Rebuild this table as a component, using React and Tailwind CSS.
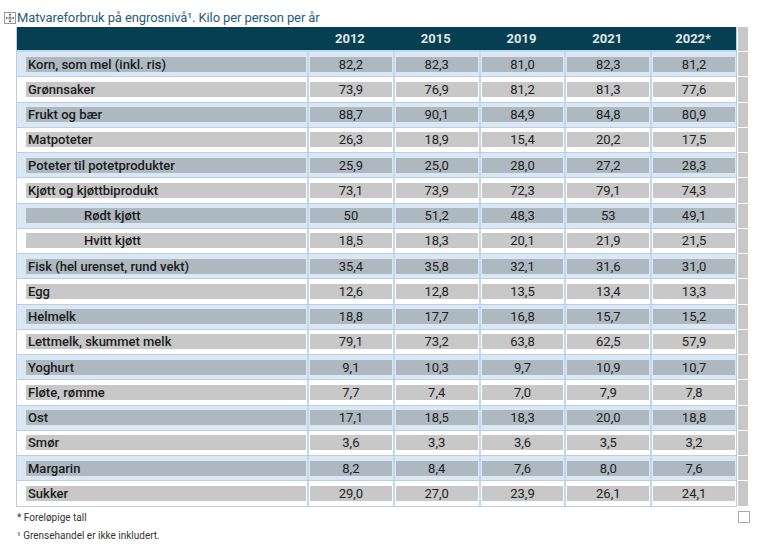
import React from 'react'

const years = ['2012', '2015', '2019', '2021', '2022*']

const rows = [
  { label: 'Korn, som mel (inkl. ris)', values: ['82,2', '82,3', '81,0', '82,3', '81,2'] },
  { label: 'Grønnsaker', values: ['73,9', '76,9', '81,2', '81,3', '77,6'] },
  { label: 'Frukt og bær', values: ['88,7', '90,1', '84,9', '84,8', '80,9'] },
  { label: 'Matpoteter', values: ['26,3', '18,9', '15,4', '20,2', '17,5'] },
  { label: 'Poteter til potetprodukter', values: ['25,9', '25,0', '28,0', '27,2', '28,3'] },
  { label: 'Kjøtt og kjøttbiprodukt', values: ['73,1', '73,9', '72,3', '79,1', '74,3'] },
  { label: 'Rødt kjøtt', indent: true, values: ['50', '51,2', '48,3', '53', '49,1'] },
  { label: 'Hvitt kjøtt', indent: true, values: ['18,5', '18,3', '20,1', '21,9', '21,5'] },
  { label: 'Fisk (hel urenset, rund vekt)', values: ['35,4', '35,8', '32,1', '31,6', '31,0'] },
  { label: 'Egg', values: ['12,6', '12,8', '13,5', '13,4', '13,3'] },
  { label: 'Helmelk', values: ['18,8', '17,7', '16,8', '15,7', '15,2'] },
  { label: 'Lettmelk, skummet melk', values: ['79,1', '73,2', '63,8', '62,5', '57,9'] },
  { label: 'Yoghurt', values: ['9,1', '10,3', '9,7', '10,9', '10,7'] },
  { label: 'Fløte, rømme', values: ['7,7', '7,4', '7,0', '7,9', '7,8'] },
  { label: 'Ost', values: ['17,1', '18,5', '18,3', '20,0', '18,8'] },
  { label: 'Smør', values: ['3,6', '3,3', '3,6', '3,5', '3,2'] },
  { label: 'Margarin', values: ['8,2', '8,4', '7,6', '8,0', '7,6'] },
  { label: 'Sukker', values: ['29,0', '27,0', '23,9', '26,1', '24,1'] },
]

function MoveHandle() {
  return (
    <div className="w-[12px] h-[12px] border border-[#9a9a9a] bg-white flex items-center justify-center">
      <svg width="10" height="10" viewBox="0 0 10 10" fill="none">
        <path d="M5 1v8M1 5h8" stroke="#555" strokeWidth="0.8" />
        <path d="M5 0.5l-1.3 1.4h2.6zM5 9.5l-1.3-1.4h2.6zM0.5 5l1.4-1.3v2.6zM9.5 5l-1.4-1.3v2.6z" fill="#555" />
      </svg>
    </div>
  )
}

function Row({ row, blue }) {
  const cellBg = blue ? 'bg-[#dce7f4]' : 'bg-white'
  const band = blue ? 'bg-[#adb8c0]' : 'bg-[#c8c8c8]'
  return (
    <div className={`grid grid-cols-[290px_repeat(5,1fr)] h-[25.25px] border-b border-[#b7cfe9] ${cellBg}`}>
      <div className="flex items-center pl-[9px] pr-px">
        <div className={`w-full h-[15px] leading-[15px] font-medium text-[#1b1b1b] ${band} ${row.indent ? 'pl-[58px]' : 'pl-[2px]'}`}>
          {row.label}
        </div>
      </div>
      {row.values.map((v, i) => (
        <div key={i} className="flex items-center px-px border-l-2 border-[#c3d7ee]">
          <div className={`w-full h-[15px] leading-[15px] text-center text-[#222] ${band}`}>{v}</div>
        </div>
      ))}
    </div>
  )
}

export default function App() {
  return (
    <div className="w-[768px] h-[548px] bg-white font-['Roboto',sans-serif] text-[13px]">
      <div className="flex items-center gap-px h-[16px] pt-[10px] pl-[4px] box-content">
        <MoveHandle />
        <span className="text-[13px] leading-[16px] text-[#1f5d7b] tracking-[-0.1px]">
          Matvareforbruk på engrosnivå¹. Kilo per person per år
        </span>
      </div>

      <div className="flex ml-[16px] mt-px">
        <div className="w-[721px] border-l border-r border-[#b7cfe9]">
          <div className="grid grid-cols-[290px_repeat(5,1fr)] h-[25px] bg-[#053f51] border-b-2 border-[#c3d7ee]">
            <div />
            {years.map((y) => (
              <div key={y} className="flex items-center justify-center font-bold text-[#e2e6e8]">
                {y}
              </div>
            ))}
          </div>
          {rows.map((row, i) => (
            <Row key={row.label} row={row} blue={i % 2 === 0} />
          ))}
        </div>
        <div className="ml-px w-[10px] flex flex-col">
          <div className="h-[25px] bg-[#c8c8c8] border-b border-white" />
          {rows.map((row) => (
            <div key={row.label} className="h-[25.25px] bg-[#c8c8c8] border-b border-white" />
          ))}
        </div>
      </div>

      <div className="flex mt-[3px]">
        <div className="w-[738px] pl-[17px] text-[10px] text-[#333] leading-[12px]">
          <div className="mt-[2px]">* Foreløpige tall</div>
          <div className="mt-[6px]">¹ Grensehandel er ikke inkludert.</div>
        </div>
        <div className="w-[12px] h-[12px] mt-px border border-[#a8a8a8] bg-white" />
      </div>
    </div>
  )
}
